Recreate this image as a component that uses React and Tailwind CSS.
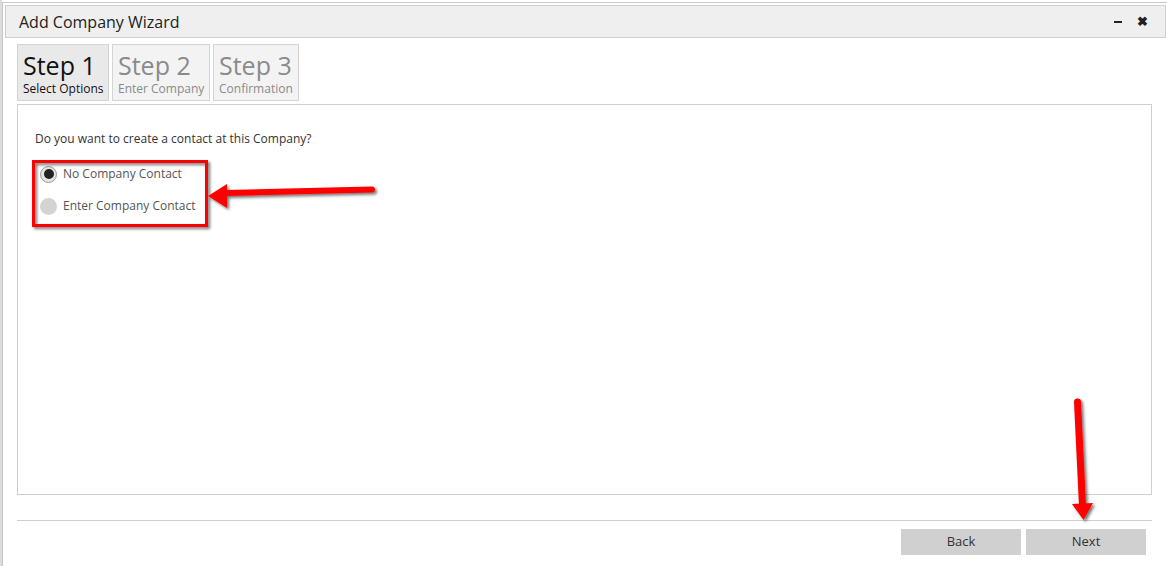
import React from 'react';

function Step({ num, label, active }) {
  return (
    <div
      className={
        'flex flex-col justify-end pb-[3px] px-[5px] h-[57px] border border-[#d4d4d4] whitespace-nowrap ' +
        (active ? 'bg-[#e9e9e9] text-[#111]' : 'bg-[#f3f3f3] text-[#8a8a8a]')
      }
    >
      <div className="text-[25px] leading-[30px]">Step {num}</div>
      <div className="text-[12px] leading-[17px]">{label}</div>
    </div>
  );
}

function Radio({ checked, label }) {
  return (
    <label className="flex items-center gap-[6px] h-[32px]">
      {checked ? (
        <span className="w-[17px] h-[17px] rounded-full bg-[#e4e4e4] border border-[#9a9a9a] flex items-center justify-center">
          <span className="w-[10px] h-[10px] rounded-full bg-[#222]" />
        </span>
      ) : (
        <span className="w-[17px] h-[17px] rounded-full bg-[#d3d3d3]" />
      )}
      <span className="text-[12px] text-[#555]">{label}</span>
    </label>
  );
}

function Annotations() {
  return (
    <svg className="absolute inset-0 pointer-events-none" width="1167" height="566">
      <defs>
        <filter id="sh" x="-20%" y="-20%" width="140%" height="140%">
          <feDropShadow dx="2" dy="2" stdDeviation="1.5" floodColor="#000" floodOpacity="0.55" />
        </filter>
      </defs>
      <g filter="url(#sh)">
        <rect x="33.5" y="161.5" width="173" height="64" fill="none" stroke="#ff0000" strokeWidth="3" />
        <path d="M372 189.5 L226 193" stroke="#ff0000" strokeWidth="6" strokeLinecap="round" />
        <path d="M208 196 L227 184 L227 208 Z" fill="#ff0000" />
        <path d="M1077.5 402 L1082.5 506" stroke="#ff0000" strokeWidth="7" strokeLinecap="round" />
        <path d="M1083.5 520 L1072 504 L1093 503 Z" fill="#ff0000" />
      </g>
    </svg>
  );
}

export default function App() {
  return (
    <div
      className="relative w-[1167px] h-[566px] overflow-hidden bg-white flex"
      style={{ fontFamily: '"Open Sans", "Noto Sans", sans-serif' }}
    >
      {/* scraps of the page behind the dialog */}
      <div className="w-[2px] shrink-0 bg-[#dcdcdc]" />
      <div className="flex-1 flex flex-col">
        <div className="h-[2px] bg-white" />
        <div className="flex-1 border-l border-t border-[#c8c8c8] bg-white flex flex-col pl-[2px] pt-[2px]">
          {/* title bar */}
          <div className="h-[33px] mr-[1px] bg-[#efefef] border border-[#cfcfcf] flex items-center justify-between pl-[13px] pr-[17px]">
            <span className="text-[16px] text-[#222]">Add Company Wizard</span>
            <div className="flex items-center gap-[15px] text-[#222]">
              <span className="w-[8px] h-[2px] bg-[#222] mt-[1px]" />
              <span className="text-[13px] font-bold leading-none">✖</span>
            </div>
          </div>

          <div className="pl-[12px] pr-[15px] flex flex-col flex-1">
            {/* steps */}
            <div className="flex gap-[3px] mt-[6px]">
              <div className="w-[92px]">
                <Step num="1" label="Select Options" active />
              </div>
              <div className="w-[98px]">
                <Step num="2" label="Enter Company" />
              </div>
              <div className="w-[86px]">
                <Step num="3" label="Confirmation" />
              </div>
            </div>

            {/* content */}
            <div className="mt-[3px] h-[391px] border border-[#cfcfcf] pt-[25px] pl-[17px]">
              <p className="text-[12px] text-[#333]">Do you want to create a contact at this Company?</p>
              <div className="mt-[10px] ml-[5px]">
                <Radio checked label="No Company Contact" />
                <Radio label="Enter Company Contact" />
              </div>
            </div>

            {/* footer */}
            <div className="mt-[25px] border-t border-[#cfcfcf] flex justify-end gap-[5px] pt-[8px] pr-[6px]">
              <button className="w-[120px] h-[26px] bg-[#d0d0d0] text-[13px] text-[#333]">Back</button>
              <button className="w-[120px] h-[26px] bg-[#d0d0d0] text-[13px] text-[#333]">Next</button>
            </div>
          </div>
        </div>
      </div>
      <Annotations />
    </div>
  );
}
